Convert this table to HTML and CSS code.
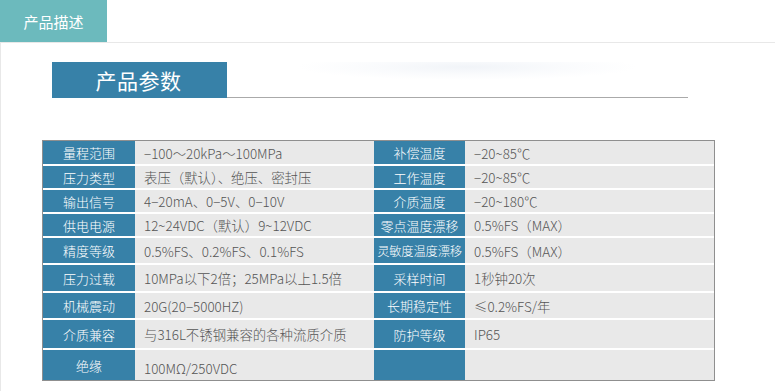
FILE: index.html
```html
<!DOCTYPE html>
<html lang="zh-CN">
<head>
<meta charset="utf-8">
<title>产品描述</title>
<link rel="stylesheet" href="styles.css">
</head>
<body>
<div class="tabs">
  <div class="tab">产品描述</div>
</div>
<div class="panel">
  <div class="title-row">
    <div class="title-box">产品参数</div>
    <div class="title-line"></div>
  </div>
  <table class="spec">
    <tr class="r1">
      <td class="lab">量程范围</td><td class="val">−100～20kPa～100MPa</td>
      <td class="lab">补偿温度</td><td class="val">−20~85℃</td>
    </tr>
    <tr class="r2">
      <td class="lab">压力类型</td><td class="val">表压（默认）、绝压、密封压</td>
      <td class="lab">工作温度</td><td class="val">−20~85℃</td>
    </tr>
    <tr class="r3">
      <td class="lab">输出信号</td><td class="val">4−20mA、0−5V、0−10V</td>
      <td class="lab">介质温度</td><td class="val">−20~180℃</td>
    </tr>
    <tr class="r4">
      <td class="lab">供电电源</td><td class="val">12~24VDC（默认）9~12VDC</td>
      <td class="lab">零点温度漂移</td><td class="val">0.5%FS（MAX）</td>
    </tr>
    <tr class="r5">
      <td class="lab">精度等级</td><td class="val">0.5%FS、0.2%FS、0.1%FS</td>
      <td class="lab narrow">灵敏度温度漂移</td><td class="val">0.5%FS（MAX）</td>
    </tr>
    <tr class="r6">
      <td class="lab">压力过载</td><td class="val">10MPa以下2倍；25MPa以上1.5倍</td>
      <td class="lab">采样时间</td><td class="val">1秒钟20次</td>
    </tr>
    <tr class="r7">
      <td class="lab">机械震动</td><td class="val">20G(20−5000HZ)</td>
      <td class="lab">长期稳定性</td><td class="val">≤0.2%FS/年</td>
    </tr>
    <tr class="r8">
      <td class="lab">介质兼容</td><td class="val">与316L不锈钢兼容的各种流质介质</td>
      <td class="lab">防护等级</td><td class="val">IP65</td>
    </tr>
    <tr class="r9">
      <td class="lab">绝缘</td><td class="val low">100MΩ/250VDC</td>
      <td class="lab"></td><td class="val"></td>
    </tr>
  </table>
</div>
</body>
</html>
```

FILE: styles.css
```css
html, body {
  margin: 0;
  padding: 0;
  background: #ffffff;
}
body {
  font-family: "Noto Sans CJK SC", "Noto Sans", sans-serif;
  width: 775px;
  height: 391px;
  overflow: hidden;
}
.tabs {
  height: 42px;
  display: flex;
}
.tab {
  width: 107px;
  height: 42px;
  background: #6cbabd;
  color: #ffffff;
  font-size: 15px;
  line-height: 44px;
  text-align: center;
}
.panel {
  border-top: 1px solid #e8e8e8;
  border-left: 1px solid #e8e8e8;
  height: 329px;
  padding: 19px 0 0 41px;
}
.title-row {
  display: flex;
  width: 636px;
  margin-left: 10px;
  height: 36px;
}
.title-box {
  width: 175px;
  height: 36px;
  background: #3781a8;
  color: #ffffff;
  font-size: 21px;
  line-height: 36px;
  text-align: center;
  letter-spacing: 0.5px;
  text-indent: -2px;
}
.title-line {
  flex: 1;
  border-bottom: 1px solid #aaaaaa;
  background: radial-gradient(ellipse 170px 13px at 240px 5px, #f1f4f8 0%, rgba(246,248,251,0.6) 55%, rgba(255,255,255,0) 100%);
}
.spec {
  margin-top: 42px;
  border-collapse: separate;
  border-spacing: 0;
  border: 1px solid #8f8f8f;
  width: 673px;
  table-layout: fixed;
  font-size: 13px;
  font-weight: 300;
}
.spec td {
  padding: 0;
  border-top: 2px solid #ffffff;
  box-sizing: border-box;
  white-space: nowrap;
  overflow: hidden;
}
.spec tr.r1 td {
  border-top: none;
}
.spec td.lab {
  background: #3781a8;
  color: #ffffff;
  text-align: center;
}
.spec td.lab.narrow {
  font-size: 12.3px;
  letter-spacing: -0.2px;
}
.spec td.val {
  background: #e9e9e9;
  color: #555555;
  padding-left: 9px;
  font-size: 13.4px;
}
.spec td.val.low {
  padding-top: 5px;
}
.spec td:nth-child(1) { width: 92px; }
.spec td:nth-child(2) { width: 239px; }
.spec td:nth-child(3) { width: 91px; }
.spec td:nth-child(4) { width: 249px; }
.spec tr.r1 td { height: 23px; }
.spec tr.r2 td { height: 24px; }
.spec tr.r3 td { height: 24px; }
.spec tr.r4 td { height: 24px; }
.spec tr.r5 td { height: 27px; }
.spec tr.r6 td { height: 28px; }
.spec tr.r7 td { height: 27px; }
.spec tr.r8 td { height: 30px; }
.spec tr.r9 td { height: 32px; }
```
